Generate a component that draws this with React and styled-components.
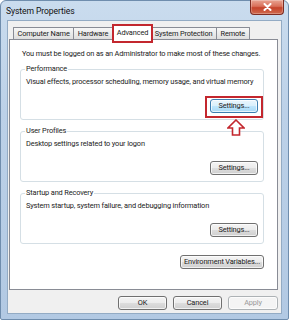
import React from 'react';
import styled, { createGlobalStyle, css } from 'styled-components';

const Global = createGlobalStyle`
  html, body { margin: 0; padding: 0; background: #ffffff; }
  body { font-family: Roboto, "Liberation Sans", sans-serif; -webkit-font-smoothing: antialiased; }
  * { box-sizing: border-box; }
`;

const Window = styled.div`
  width: 289px;
  height: 320px;
  border: 1px solid #6f8dad;
  border-radius: 6px 6px 2px 2px;
  background: linear-gradient(180deg, #cadcee 0%, #bcd1e8 35%, #b2c9e3 100%);
  display: flex;
  flex-direction: column;
  padding: 0 6px 5px 6px;
`;

const TitleBar = styled.div`
  height: 19px;
  margin: 0 -6px;
  padding: 0 4px 0 5px;
  display: flex;
  align-items: flex-start;
`;

const Title = styled.div`
  font-size: 8.6px;
  line-height: 10px;
  margin-top: 5px;
  color: #111111;
  letter-spacing: -0.1px;
`;

const CloseButton = styled.div`
  margin-left: auto;
  margin-top: -1px;
  width: 34px;
  height: 15px;
  border: 1px solid #7d2c22;
  border-top: none;
  border-radius: 0 0 4px 4px;
  background: linear-gradient(180deg, #e9a493 0%, #d9705a 45%, #c5432b 55%, #cf6a4e 100%);
  display: flex;
  align-items: center;
  justify-content: center;
  box-shadow: inset 0 0 0 1px rgba(255,255,255,0.25);
`;

const Client = styled.div`
  flex: 1;
  background: #f0f0f0;
  border: 1px solid #93abc4;
  display: flex;
  flex-direction: column;
  padding: 4px 3px 3px 1px;
`;

const TabRow = styled.div`
  display: flex;
  align-items: flex-end;
  padding-left: 5px;
  margin-bottom: -1px;
  position: relative;
  z-index: 1;
`;

const Tab = styled.div`
  position: relative;
  height: 12px;
  margin-bottom: 1px;
  margin-left: -1px;
  padding: 0 3.5px;
  border: 1px solid #898c95;
  border-bottom: none;
  border-radius: 1px 1px 0 0;
  background: linear-gradient(180deg, #f7f7f7 0%, #ebebeb 50%, #dedede 100%);
  font-size: 7.4px;
  letter-spacing: -0.15px;
  line-height: 11px;
  color: #1b1b1b;
  white-space: nowrap;
  ${(p) =>
    p.$active &&
    css`
      height: 15px;
      margin: 0 -1px 0 0;
      padding: 1px 3px 0;
      background: #ffffff;
      z-index: 2;
    `}
  ${(p) =>
    p.$marked &&
    css`
      &::after {
        content: '';
        position: absolute;
        top: -2px;
        left: -2px;
        right: -2px;
        bottom: -3px;
        border: 2px solid #c3272e;
      }
    `}
`;

const Panel = styled.div`
  flex: 1;
  background: #ffffff;
  border: 1px solid #898c95;
  padding: 8px 13px 0 10px;
  display: flex;
  flex-direction: column;
`;

const Text = styled.div`
  font-size: 7.4px;
  letter-spacing: -0.15px;
  line-height: 11px;
  color: #1b1b1b;
  white-space: nowrap;
  padding-left: ${(p) => p.$indent || 0}px;
`;

const Group = styled.fieldset`
  margin: ${(p) => p.$top}px 0 0 0;
  padding: 2px 5px 6px 5px;
  border: 1px solid #d5dfe5;
  border-radius: 3px;
  min-width: 0;
  display: flex;
  flex-direction: column;
`;

const Legend = styled.legend`
  font-size: 7.4px;
  letter-spacing: -0.15px;
  line-height: 10px;
  color: #1b1b1b;
  padding: 0 1px;
  margin-left: -1px;
`;

const GroupActions = styled.div`
  display: flex;
  justify-content: flex-end;
  margin-top: 12px;
`;

const Button = styled.div`
  width: ${(p) => p.$w || 48}px;
  height: 14px;
  border: 1px solid #707070;
  border-radius: 3px;
  background: linear-gradient(180deg, #f4f4f4 0%, #ececec 48%, #dddddd 52%, #cfcfcf 100%);
  box-shadow: inset 0 0 0 1px rgba(255,255,255,0.7);
  font-size: 7.4px;
  letter-spacing: -0.15px;
  line-height: 12px;
  text-align: center;
  color: #1b1b1b;
  white-space: nowrap;
  ${(p) =>
    p.$focused &&
    css`
      border-color: #3c7fb1;
      background: linear-gradient(180deg, #eaf6fd 0%, #d9f0fc 48%, #bee6fd 52%, #a7d9f5 100%);
    `}
  ${(p) =>
    p.$disabled &&
    css`
      border-color: #adb2b5;
      background: #f4f4f4;
      color: #9a9a9a;
    `}
`;

const Marked = styled.div`
  position: relative;
  &::after {
    content: '';
    position: absolute;
    top: -3px;
    left: -5px;
    right: -5px;
    bottom: -5px;
    border: 2px solid #c3272e;
  }
`;

const ArrowMark = styled.svg`
  position: absolute;
  top: 20px;
  left: 17px;
  z-index: 3;
`;

const EnvRow = styled.div`
  display: flex;
  justify-content: flex-end;
  margin-top: 11px;
`;

const Footer = styled.div`
  display: flex;
  justify-content: flex-end;
  gap: 6px;
  margin-top: 6px;
`;

function Section({ label, desc, top, marked }) {
  const btn = <Button $focused={marked}>Settings...</Button>;
  return (
    <Group $top={top}>
      <Legend>{label}</Legend>
      <Text>{desc}</Text>
      <GroupActions>
        {marked ? (
          <Marked>
            {btn}
            <ArrowMark width="18" height="17" viewBox="0 0 18 17">
              <path
                d="M9 1 L17 9 L12.5 9 L12.5 16 L5.5 16 L5.5 9 L1 9 Z"
                fill="#ffffff"
                stroke="#c3272e"
                strokeWidth="1.6"
                strokeLinejoin="miter"
              />
            </ArrowMark>
          </Marked>
        ) : (
          btn
        )}
      </GroupActions>
    </Group>
  );
}

export default function App() {
  return (
    <>
      <Global />
      <Window>
        <TitleBar>
          <Title>System Properties</Title>
          <CloseButton>
            <svg width="9" height="8" viewBox="0 0 9 8">
              <path d="M1.5 1 L7.5 7 M7.5 1 L1.5 7" stroke="#ffffff" strokeWidth="2" strokeLinecap="round" />
            </svg>
          </CloseButton>
        </TitleBar>
        <Client>
          <TabRow>
            <Tab>Computer Name</Tab>
            <Tab>Hardware</Tab>
            <Tab $active $marked>Advanced</Tab>
            <Tab>System Protection</Tab>
            <Tab>Remote</Tab>
          </TabRow>
          <Panel>
            <Text $indent={2}>You must be logged on as an Administrator to make most of these changes.</Text>
            <Section
              top={5}
              label="Performance"
              desc="Visual effects, processor scheduling, memory usage, and virtual memory"
              marked
            />
            <Section top={6} label="User Profiles" desc="Desktop settings related to your logon" />
            <Section
              top={6}
              label="Startup and Recovery"
              desc="System startup, system failure, and debugging information"
            />
            <EnvRow>
              <Button $w={84}>Environment Variables...</Button>
            </EnvRow>
          </Panel>
          <Footer>
            <Button $w={49}>OK</Button>
            <Button $w={49}>Cancel</Button>
            <Button $w={50} $disabled>Apply</Button>
          </Footer>
        </Client>
      </Window>
    </>
  );
}
